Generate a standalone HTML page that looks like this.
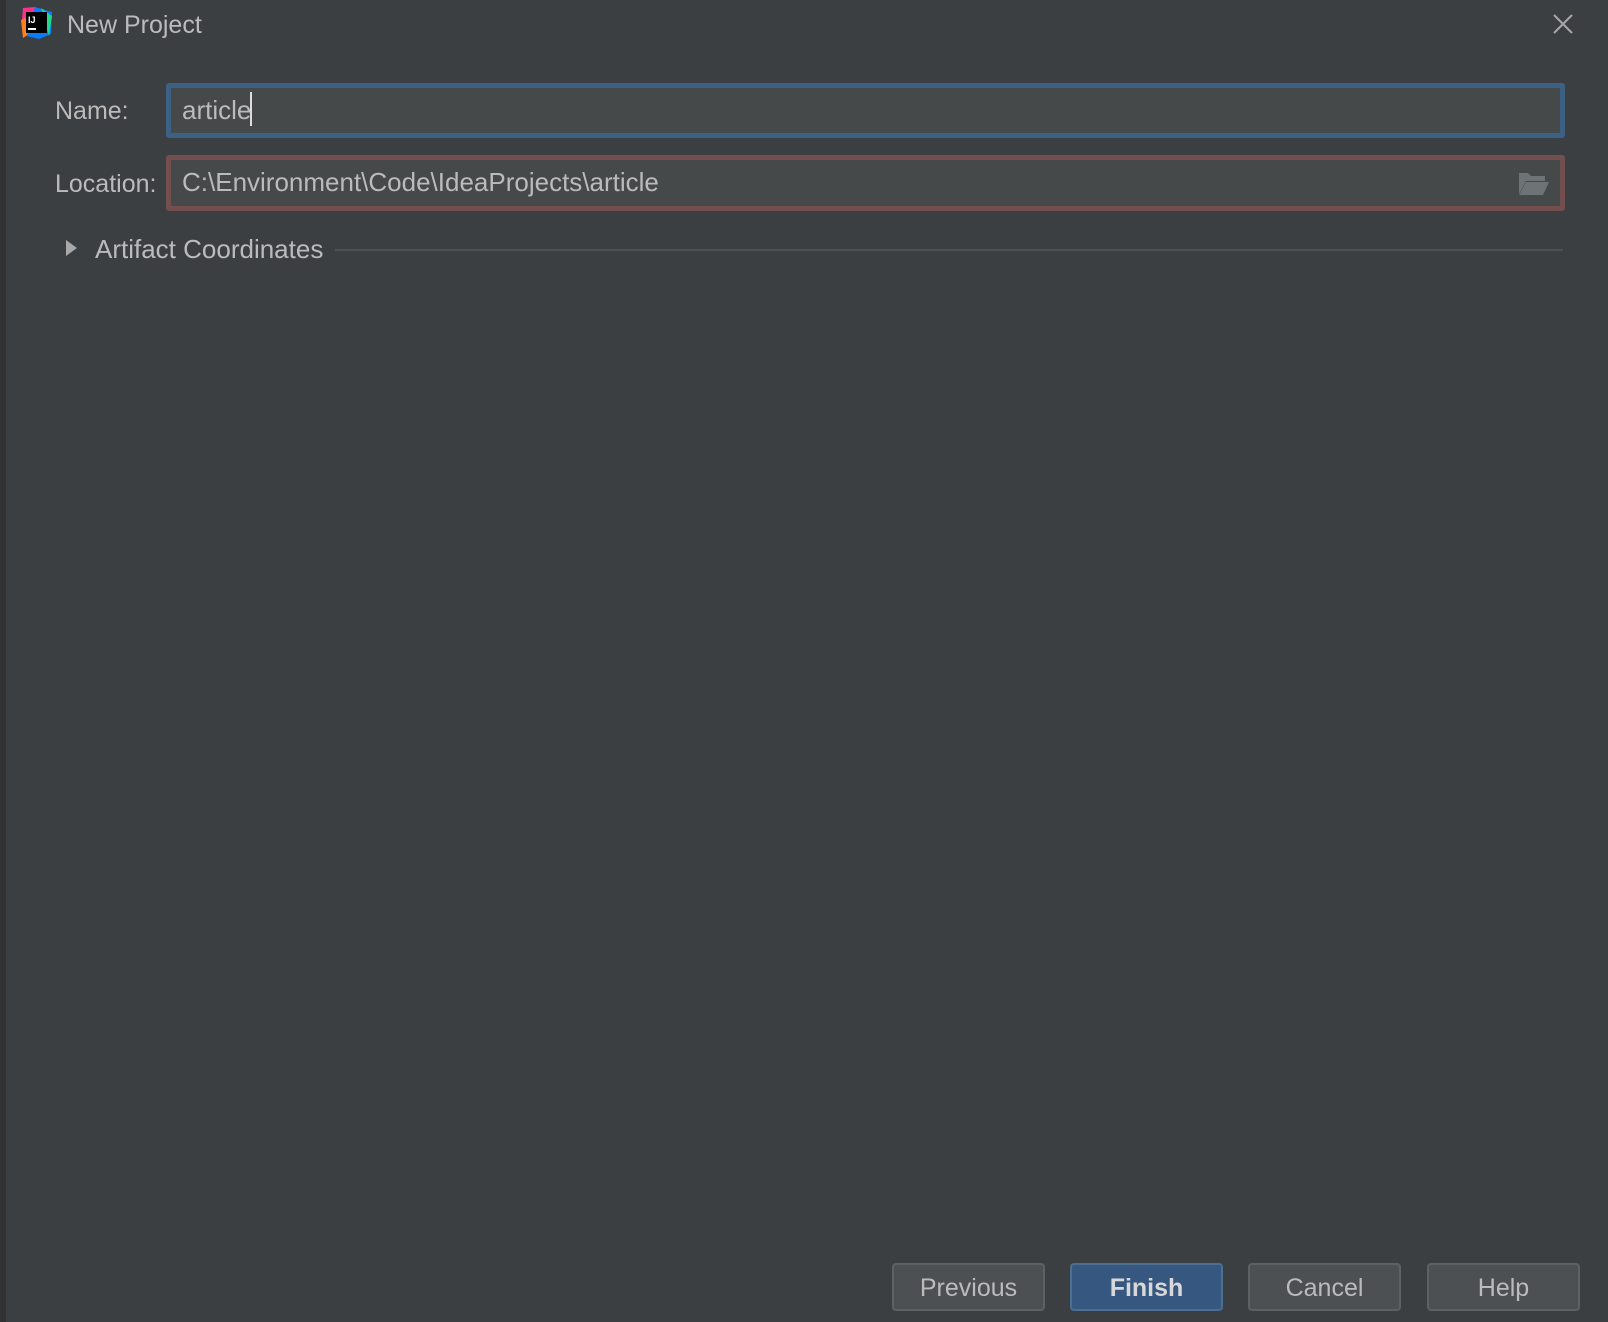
<!DOCTYPE html>
<html><head><style>
*{margin:0;padding:0;box-sizing:border-box}
body{width:1608px;height:1322px;background:#3c3f41;position:relative;overflow:hidden;font-family:"Liberation Sans",sans-serif;color:#bbbbbb}
.strip{position:absolute;left:0;top:0;width:6px;height:1322px;background:#2f3133}
.t{position:absolute;white-space:nowrap}
.field{position:absolute;background:#45494a;border-radius:3px}
.btn{position:absolute;top:1263px;height:48px;width:153px;background:#4c5052;border:2px solid #5e6162;border-radius:4px;font-size:25px;text-align:center;line-height:46px;color:#bbbbbb}
</style></head><body>
<div class="strip"></div>
<svg style="position:absolute;left:19px;top:6px" width="34" height="34" viewBox="0 0 34 34">
<polygon points="4,2 16,1 14,12 3,14" fill="#ff318c"/>
<polygon points="2,14 12,10 10,28 4,32" fill="#fc801d"/>
<polygon points="16,1 33,6 32,28 20,33 8,30" fill="#087cfa"/>
<polygon points="22,2 33,10 30,30" fill="#21d789"/>
<rect x="7" y="6" width="21" height="21" fill="#000"/>
<text x="9" y="17" font-family="Liberation Sans" font-weight="bold" font-size="9" fill="#fff">IJ</text>
<rect x="9" y="22" width="8" height="2" fill="#fff"/>
</svg>
<div class="t" style="left:67px;top:11px;font-size:25px">New Project</div>
<svg style="position:absolute;left:1552px;top:13px" width="22" height="22"><path d="M2 2L20 20M20 2L2 20" stroke="#a8a8a8" stroke-width="2"/></svg>
<div class="t" style="left:55px;top:97px;font-size:25px">Name:</div>
<div class="field" style="left:166px;top:83px;width:1399px;height:55px;border:5px solid #3d6185"></div>
<div class="t" style="left:182px;top:95px;font-size:26px">article</div>
<div style="position:absolute;left:250px;top:92px;width:2px;height:34px;background:#ddd"></div>
<div class="t" style="left:55px;top:170px;font-size:25px">Location:</div>
<div class="field" style="left:166px;top:155px;width:1399px;height:56px;border:5px solid #734f4f"></div>
<div class="t" style="left:182px;top:167px;font-size:26px">C:\Environment\Code\IdeaProjects\article</div>
<svg style="position:absolute;left:1518px;top:172px" width="32" height="24" viewBox="0 0 32 24"><path d="M1 1h9l3 3h14v5H8L1 22z" fill="#6e7376"/><path d="M8 10h23l-6 13H1z" fill="#6e7376"/></svg>
<svg style="position:absolute;left:65px;top:239px" width="14" height="18"><path d="M1 1L12 9L1 17z" fill="#a8a8a8"/></svg>
<div class="t" style="left:95px;top:234px;font-size:26px">Artifact Coordinates</div>
<div style="position:absolute;left:335px;top:249px;width:1228px;height:2px;background:#4e5254"></div>
<div class="btn" style="left:892px">Previous</div>
<div class="btn" style="left:1070px;background:#365880;border-color:#4a6f90;font-weight:bold;color:#d8d8d8">Finish</div>
<div class="btn" style="left:1248px">Cancel</div>
<div class="btn" style="left:1427px">Help</div>
</body></html>
